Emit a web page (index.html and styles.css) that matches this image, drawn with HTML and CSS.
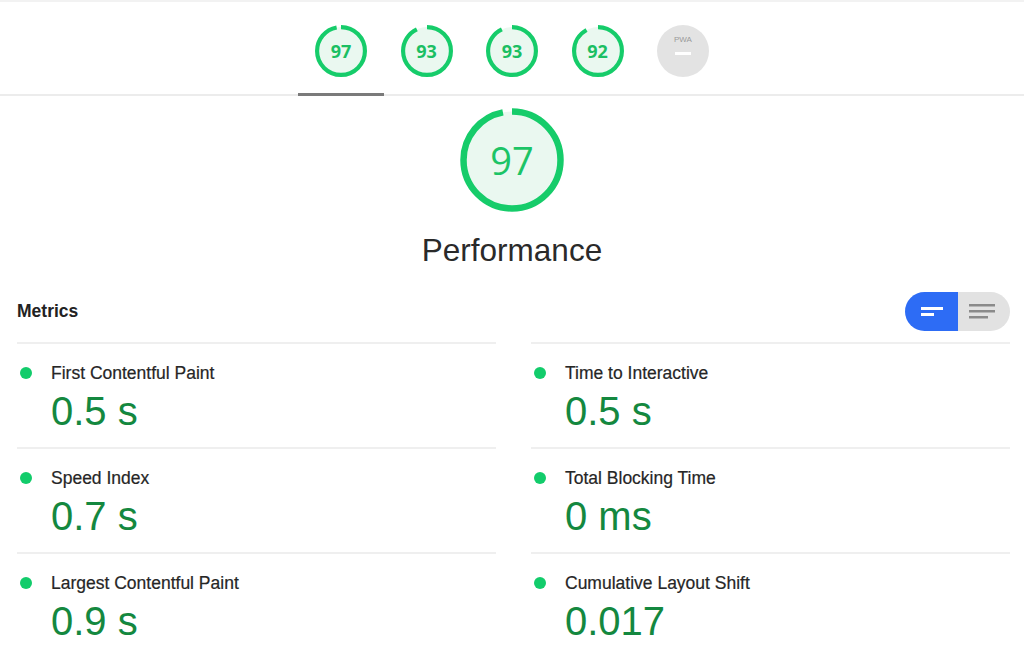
FILE: index.html
```html
<!DOCTYPE html>
<html>
<head>
<meta charset="utf-8">
<link rel="stylesheet" href="styles.css">
</head>
<body>
<header class="tabs">
  <div class="tab active">
    <svg class="mini-gauge" viewBox="0 0 50 50"><circle class="g-bg" cx="25" cy="25" r="23"/><circle class="g-arc" cx="25" cy="25" r="23" pathLength="100" stroke-dasharray="97 100"/></svg>
    <span class="mini-score">97</span>
  </div>
  <div class="tab">
    <svg class="mini-gauge" viewBox="0 0 50 50"><circle class="g-bg" cx="25" cy="25" r="23"/><circle class="g-arc" cx="25" cy="25" r="23" pathLength="100" stroke-dasharray="93 100"/></svg>
    <span class="mini-score">93</span>
  </div>
  <div class="tab">
    <svg class="mini-gauge" viewBox="0 0 50 50"><circle class="g-bg" cx="25" cy="25" r="23"/><circle class="g-arc" cx="25" cy="25" r="23" pathLength="100" stroke-dasharray="93 100"/></svg>
    <span class="mini-score">93</span>
  </div>
  <div class="tab">
    <svg class="mini-gauge" viewBox="0 0 50 50"><circle class="g-bg" cx="25" cy="25" r="23"/><circle class="g-arc" cx="25" cy="25" r="23" pathLength="100" stroke-dasharray="92 100"/></svg>
    <span class="mini-score">92</span>
  </div>
  <div class="tab">
    <div class="pwa">
      <span class="pwa-label">PWA</span>
      <span class="pwa-dash"></span>
    </div>
  </div>
</header>

<section class="summary">
  <div class="big-gauge">
    <svg viewBox="0 0 104 104"><circle class="g-bg" cx="52" cy="52" r="48.5"/><circle class="g-arc big" cx="52" cy="52" r="48.5" pathLength="100" stroke-dasharray="97 100"/></svg>
    <span class="big-score">97</span>
  </div>
  <h1 class="title">Performance</h1>
</section>

<section class="metrics">
  <div class="metrics-head">
    <h2>Metrics</h2>
    <div class="toggle">
      <span class="tg tg-on">
        <svg width="24" height="10" viewBox="0 0 24 10"><rect x="0" y="0" width="22" height="3" fill="#fff"/><rect x="0" y="6" width="13" height="3" fill="#fff"/></svg>
      </span>
      <span class="tg tg-off">
        <svg width="26" height="16" viewBox="0 0 26 16"><rect x="0" y="0" width="26" height="2.5" fill="#8a8a8a"/><rect x="0" y="6" width="26" height="2.5" fill="#8a8a8a"/><rect x="0" y="12" width="19" height="2.5" fill="#8a8a8a"/></svg>
      </span>
    </div>
  </div>
  <div class="grid">
    <div class="metric">
      <div class="m-title"><span class="dot"></span>First Contentful Paint</div>
      <div class="m-value">0.5 s</div>
    </div>
    <div class="metric">
      <div class="m-title"><span class="dot"></span>Time to Interactive</div>
      <div class="m-value">0.5 s</div>
    </div>
    <div class="metric">
      <div class="m-title"><span class="dot"></span>Speed Index</div>
      <div class="m-value">0.7 s</div>
    </div>
    <div class="metric">
      <div class="m-title"><span class="dot"></span>Total Blocking Time</div>
      <div class="m-value">0 ms</div>
    </div>
    <div class="metric">
      <div class="m-title"><span class="dot"></span>Largest Contentful Paint</div>
      <div class="m-value">0.9 s</div>
    </div>
    <div class="metric">
      <div class="m-title"><span class="dot"></span>Cumulative Layout Shift</div>
      <div class="m-value">0.017</div>
    </div>
  </div>
</section>
</body>
</html>
```

FILE: styles.css
```css
* { box-sizing: border-box; }
html, body { margin: 0; padding: 0; background: #fff; }
body {
  font-family: "Liberation Sans", Arial, sans-serif;
  color: #222;
  width: 1024px;
  height: 654px;
  overflow: hidden;
}

.tabs {
  display: flex;
  justify-content: center;
  border-top: 2px solid #f2f2f2;
  border-bottom: 2px solid #ececec;
  height: 96px;
}
.tab {
  width: 85.5px;
  height: 94px;
  display: flex;
  justify-content: center;
  padding-top: 23px;
  position: relative;
  border-bottom: 3px solid transparent;
}
.tab.active { border-bottom-color: #7a7a7a; }

.mini-gauge {
  width: 52px;
  height: 52px;
  transform: rotate(-90deg);
}
.g-bg {
  fill: #eaf8f0;
  stroke: none;
}
.g-arc {
  fill: none;
  stroke: #16cc6a;
  stroke-width: 4;
}
.g-arc.big { stroke-width: 6.5; }

.mini-score {
  position: absolute;
  top: 23px;
  left: 0;
  right: 0;
  height: 52px;
  line-height: 52px;
  text-align: center;
  font-family: "Open Sans", sans-serif;
  font-weight: 700;
  font-size: 18px;
  color: #1bbf63;
}

.pwa {
  width: 52px;
  height: 52px;
  border-radius: 50%;
  background: #e3e3e3;
  display: flex;
  flex-direction: column;
  align-items: center;
  padding-top: 10px;
}
.pwa-label {
  font-size: 8px;
  line-height: 10px;
  color: #9a9a9a;
  font-family: "Liberation Sans", sans-serif;
}
.pwa-dash {
  width: 16px;
  height: 3px;
  background: #fff;
  margin-top: 7px;
}

.summary {
  display: flex;
  flex-direction: column;
  align-items: center;
  padding-top: 12px;
}
.big-gauge {
  width: 104px;
  height: 104px;
  position: relative;
}
.big-gauge svg {
  width: 104px;
  height: 104px;
  transform: rotate(-90deg);
}
.big-score {
  position: absolute;
  inset: 0;
  display: flex;
  align-items: center;
  justify-content: center;
  font-family: "Open Sans", sans-serif;
  font-weight: 400;
  font-size: 38px;
  color: #1cc466;
}
.title {
  margin: 20px 0 0;
  font-size: 31.5px;
  font-weight: 400;
  line-height: 36px;
  color: #2a2a2a;
}

.metrics {
  padding: 0 14px 0 17px;
}
.metrics-head {
  display: flex;
  justify-content: space-between;
  align-items: center;
  margin-top: 24px;
  height: 39px;
}
.metrics-head h2 {
  margin: 0;
  font-size: 17.5px;
  font-weight: 700;
  color: #222;
}
.toggle {
  display: flex;
  width: 105px;
  height: 39px;
  border-radius: 20px;
  overflow: hidden;
}
.tg {
  flex: 1;
  display: flex;
  align-items: center;
  justify-content: center;
}
.tg-on { background: #2d6cf5; padding-left: 4px; }
.tg-off { background: #e2e2e2; padding-right: 4px; }

.grid {
  display: grid;
  grid-template-columns: 1fr 1fr;
  column-gap: 35px;
  margin-top: 11px;
}
.metric {
  border-top: 2px solid #efefef;
  height: 105px;
  padding-top: 19px;
}
.m-title {
  display: flex;
  align-items: center;
  font-size: 17.5px;
  line-height: 20px;
  color: #262626;
  -webkit-text-stroke: 0.2px #262626;
}
.dot {
  width: 12px;
  height: 12px;
  border-radius: 50%;
  background: #12cc6b;
  margin: 0 19px 0 3px;
  flex: none;
}
.m-value {
  padding-left: 34px;
  font-size: 40px;
  line-height: 44px;
  color: #14883f;
  margin-top: 6px;
}
```
